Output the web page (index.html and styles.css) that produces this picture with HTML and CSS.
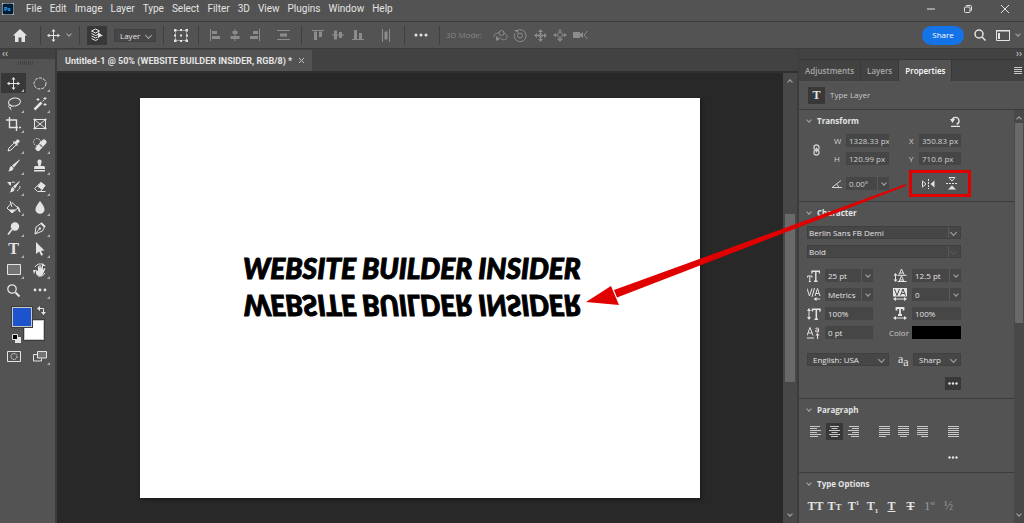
FILE: index.html
```html
<!doctype html>
<html lang="en">
<head>
    <meta charset="UTF-8">
    <meta name="viewport" content="width=device-width, initial-scale=1.0">
    <title>Untitled-1 @ 50%</title>
    <link rel="stylesheet" href="styles.css">
</head>
<body>
    <header class="menubar">
        <svg class="logo" viewBox="0 0 12 12"><rect width="12" height="12" rx="2" fill="#001e36"/><text x="2" y="8" class="logo-text">Ps</text></svg>
        <nav class="menus">
            <button>File</button>
            <button>Edit</button>
            <button>Image</button>
            <button>Layer</button>
            <button>Type</button>
            <button>Select</button>
            <button>Filter</button>
            <button>3D</button>
            <button>View</button>
            <button>Plugins</button>
            <button>Window</button>
            <button>Help</button>
        </nav>
        <div class="window-buttons">
            <button aria-label="Minimize"><svg width="10" height="10" viewBox="0 0 10 10"><path d="M1 5h8"/></svg></button>
            <button aria-label="Restore"><svg width="10" height="10" viewBox="0 0 10 10"><rect x="1.5" y="3" width="5.5" height="5.5" rx="1"/><path d="M3 2.500q0-1 1-1h3.500q1 0 1 1v3.500q0 1-1 1"/></svg></button>
            <button aria-label="Close"><svg width="10" height="10" viewBox="0 0 10 10"><path d="M1 1l8 8M9 1L1 9"/></svg></button>
        </div>
    </header>

    <div class="options">
        <button class="opt home" aria-label="Home"><svg width="14" height="13" viewBox="0 0 14 13"><path class="fill" d="M7 0L14 6.500h-2V13H8.500V8.500h-3V13H2V6.500H0z"/></svg></button>
        <div class="group g-move">
            <button class="opt" aria-label="Move tool"><svg width="13" height="13" viewBox="0 0 13 13"><path d="M6.500 1v11M1 6.500h11"/><path class="fill" d="M6.500 0l2 2.500h-4zM6.500 13l2-2.500h-4zM0 6.500l2.500-2v4zM13 6.500l-2.500-2v4z"/></svg></button>
            <span class="chev"></span>
        </div>
        <div class="group g-layer">
            <button class="opt active" aria-label="Auto-select"><svg width="14" height="14" viewBox="0 0 14 14"><path d="M5.500 1l4 2-4 2-4-2zM1.500 5.500l4 2 2.500-1M1.500 8l4 2 2-1M1.500 10.500l4 2 2.500-1.200"/><path class="fill" d="M8 4l5 4-3 .500-2 2z"/></svg></button>
            <label class="select pick">
                <select aria-label="Auto-select target"><option>Layer</option><option>Group</option></select>
            </label>
        </div>
        <div class="group g-box">
            <button class="opt" aria-label="Show transform controls"><svg width="14" height="13" viewBox="0 0 14 13"><path stroke-dasharray="1 1" d="M1.500 1.500h11v10h-11z"/><path class="fill" d="M0 0h2.500v2.500H0zM6 0h2v2H6zM11.500 0H14v2.500h-2.500zM0 5.500h2v2H0zM6 5.500h2v2H6zM12 5.500h2v2h-2zM0 10.500h2.500V13H0zM6 11h2v2H6zM11.500 10.500H14V13h-2.500z"/></svg></button>
        </div>
        <div class="group g-align dim">
            <button class="opt" aria-label="Align left"><svg width="12" height="12" viewBox="0 0 12 12"><path d="M1.500 0v12"/><path class="fill" d="M3 2h5v3H3zM3 7h8v3H3z"/></svg></button>
            <button class="opt" aria-label="Align centers"><svg width="12" height="12" viewBox="0 0 12 12"><path d="M6 0v12"/><path class="fill" d="M3.500 2h5v3h-5zM1.500 7h9v3h-9z"/></svg></button>
            <button class="opt" aria-label="Align right"><svg width="12" height="12" viewBox="0 0 12 12"><path d="M10.500 0v12"/><path class="fill" d="M4 2h5v3H4zM1 7h8v3H1z"/></svg></button>
            <button class="opt wide" aria-label="Distribute vertically"><svg width="13" height="12" viewBox="0 0 13 12"><path d="M0 1.500h13M0 10.500h13"/><path class="fill" d="M3 4.500h7v3H3z"/></svg></button>
        </div>
        <div class="group g-valign dim">
            <button class="opt" aria-label="Align top"><svg width="12" height="12" viewBox="0 0 12 12"><path d="M0 1.500h12"/><path class="fill" d="M2 2.500h3V11H2zM7 2.500h3V8H7z"/></svg></button>
            <button class="opt" aria-label="Align middle"><svg width="12" height="12" viewBox="0 0 12 12"><path d="M0 6h12"/><path class="fill" d="M2 1.500h3v9H2zM7 3h3v6H7z"/></svg></button>
            <button class="opt" aria-label="Align bottom"><svg width="12" height="12" viewBox="0 0 12 12"><path d="M0 10.500h12"/><path class="fill" d="M2 1h3v9H2zM7 4h3v6H7z"/></svg></button>
            <button class="opt wide" aria-label="Distribute horizontally"><svg width="10" height="13" viewBox="0 0 10 13"><path d="M1.500 0v13M8.500 0v13"/><path class="fill" d="M3.500 2.500h3v8h-3z"/></svg></button>
        </div>
        <div class="group g-more">
            <button class="opt" aria-label="More options"><svg width="14" height="4" viewBox="0 0 14 4"><g class="fill"><circle cx="2" cy="2" r="1.500"/><circle cx="7" cy="2" r="1.500"/><circle cx="12" cy="2" r="1.500"/></g></svg></button>
        </div>
        <div class="group g-3d dim">
            <span class="mode">3D Mode:</span>
            <button class="opt" aria-label="Orbit"><svg width="15" height="13" viewBox="0 0 15 13"><circle cx="8.500" cy="4" r="2.500"/><path d="M6 4C2 4 0 6 1.500 8M11 4c3 1.500 4 4 2 6s-5 0-6-1.500"/><path class="fill" d="M3 7l4 3-4 2z"/></svg></button>
            <button class="opt" aria-label="Roll"><svg width="14" height="13" viewBox="0 0 14 13"><circle cx="7" cy="6.500" r="2.500"/><path d="M4 1.500a6 6 0 1 1-2.500 3"/><path class="fill" d="M1 1h4v3z"/></svg></button>
            <button class="opt" aria-label="Pan"><svg width="13" height="13" viewBox="0 0 13 13"><path d="M6.500 2v9M2 6.500h9"/><circle cx="6.500" cy="6.500" r="2"/><path class="fill" d="M6.500 0L9 3H4zM6.500 13L9 10H4zM0 6.500L3 4v5zM13 6.500L10 4v5z"/></svg></button>
            <button class="opt" aria-label="Slide"><svg width="14" height="13" viewBox="0 0 14 13"><circle cx="7" cy="6" r="2.500"/><path d="M1 6h3M10 6h3"/><path class="fill" d="M7 0l2 2.500H5zM7 13l3-3.500H4zM0 6l3-2v4zM14 6l-3-2v4z"/></svg></button>
            <button class="opt" aria-label="Zoom camera"><svg width="15" height="10" viewBox="0 0 15 10"><path class="fill" d="M0 2h7v6H0zM7 4l3-2v6L7 6z"/><path d="M14.500 1L11 5l3.500 4"/></svg></button>
        </div>
        <div class="right-tools">
            <button class="share">Share</button>
            <button class="opt" aria-label="Search"><svg width="12" height="12" viewBox="0 0 12 12"><g stroke-width="1.500"><circle cx="5" cy="5" r="4"/><path d="M8 8l3.500 3.500"/></g></svg></button>
            <button class="opt" aria-label="Workspace"><svg width="14" height="11" viewBox="0 0 14 11"><path d="M.500 .500h13v10H.500z"/><path class="fill" d="M2 3h2v6H2zM0 0h14v1.500H0z"/></svg></button>
            <span class="chev"></span>
        </div>
    </div>

    <main class="workspace">
        <aside class="tools">
            <div class="strip">‹‹</div>
            <div class="grip"></div>
            <div class="tool-grid">
                <button class="active corner" aria-label="Move"><svg width="13" height="13" viewBox="0 0 13 13"><path d="M6.500 1v11M1 6.500h11"/><path class="fill" d="M6.500 0l2 2.500h-4zM6.500 13l2-2.500h-4zM0 6.500l2.500-2v4zM13 6.500l-2.500-2v4z"/></svg></button>
                <button class="corner" aria-label="Marquee"><svg width="14" height="13" viewBox="0 0 14 13"><ellipse cx="7" cy="6.500" rx="6" ry="5.500" stroke-dasharray="3 1.200"/></svg></button>
                <button class="corner" aria-label="Lasso"><svg width="14" height="14" viewBox="0 0 14 14"><ellipse cx="7.500" cy="5" rx="6" ry="4" transform="rotate(-10 7.500 5)"/><path d="M3 8c-2 0-2 2.500 0 2.500S5 8 3 8M3 10.500q0 2 1.500 2.500"/></svg></button>
                <button class="corner" aria-label="Magic wand"><svg width="14" height="14" viewBox="0 0 14 14"><path stroke-width="2.500" d="M1.500 12.500l7-7"/><path d="M9.500 4.500l1.500-1.500M5 1v3M3.500 2.500h3M12 6v3M10.500 7.500h3M12 0v3M10.500 1.500h3"/></svg></button>
                <button class="corner" aria-label="Crop"><svg width="15" height="14" viewBox="0 0 15 14"><path stroke-width="1.400" d="M3.500 0v10.500H12M0 3h10.500v11M13 10.500h2"/></svg></button>
                <button aria-label="Frame"><svg width="14" height="12" viewBox="0 0 14 12"><path d="M.500 1.500h13M.500 10.500h13M1.500 .500v11M12.500 .500v11M2 2l10 8M12 2L2 10"/></svg></button>
                <button class="corner" aria-label="Eyedropper"><svg width="13" height="13" viewBox="0 0 13 13"><path d="M7 4L2 9l-1 3 3-1 5-5"/><path class="fill" d="M6 3l1-1 1 1 2-2.500q3-.500 2.500 2.500L10 5l1 1-1 1z"/></svg></button>
                <button class="corner" aria-label="Healing brush"><svg width="14" height="14" viewBox="0 0 14 14"><path stroke-width="5" stroke-linecap="round" d="M5 10.500L11 4"/><circle cx="4" cy="4" r="3.500" stroke-dasharray="1.500 1"/><path class="cut" d="M6.500 6l3.500 3.500M8 7.500v.800"/></svg></button>
                <button class="corner" aria-label="Brush"><svg width="13" height="13" viewBox="0 0 13 13"><path class="fill" d="M12.500 .500q.500 0 0 1L7 8.500 5 6.500zM4.500 7l2 2q0 3-5.500 3.500 1.500-1 1.500-3T4.500 7z"/></svg></button>
                <button class="corner" aria-label="Clone stamp"><svg width="13" height="13" viewBox="0 0 13 13"><path class="fill" d="M5.500 7L4.500 3.500Q4 .500 6.500 .500t2 3L7.500 7H11q1 0 1 3H1q0-3 1-3zM1 11h11v1.500H1z"/></svg></button>
                <button class="corner" aria-label="History brush"><svg width="14" height="13" viewBox="0 0 14 13"><path class="fill" d="M12.500 1q.500 0 0 1L8 8.500 6 6.500zM5.500 7l2 2q0 3-5 3.500 1.500-1 1.500-3t1.500-2.500z"/><path d="M2 5q2-4 6-2.500M13 6q0 3-3 5" stroke-dasharray="3 1"/><path class="fill" d="M0 2h4v4z"/></svg></button>
                <button class="corner" aria-label="Eraser"><svg width="13" height="12" viewBox="0 0 13 12"><path d="M1.500 7.500l3 3h3l4.500-6-4-3z"/><path class="fill" d="M8 1l4.500 3.500L9 9 4.500 5.500z"/><path d="M7 10.500h5.500"/></svg></button>
                <button class="corner" aria-label="Paint bucket"><svg width="15" height="13" viewBox="0 0 15 13"><path d="M6 1.500l6 5.500-6 5-5-5zM4 0l2 6"/><path class="fill" d="M3 8.500h7L6 12zM11 5q3 1 3.500 6.500Q12 11 12 7z"/></svg></button>
                <button class="corner" aria-label="Blur"><svg width="10" height="13" viewBox="0 0 10 13"><path class="fill" d="M5 0q4.500 5.500 4.500 8.500a4.500 4.300 0 0 1-9 0Q.500 5.500 5 0z"/></svg></button>
                <button class="corner" aria-label="Dodge"><svg width="13" height="13" viewBox="0 0 13 13"><circle class="fill" cx="8" cy="4.500" r="4.200"/><path stroke-width="1.600" d="M5 7.500l-4 5"/></svg></button>
                <button class="corner" aria-label="Pen"><svg width="13" height="13" viewBox="0 0 13 13"><path d="M8 1.500l3.500 3.500-2 4L2 12l1-7zM2 12l4.500-5"/><circle class="fill" cx="6.800" cy="6.500" r="1.200"/><path stroke-width="2" d="M8 1l4 4"/></svg></button>
                <button class="corner glyph" aria-label="Type">T</button>
                <button class="corner" aria-label="Path selection"><svg width="10" height="14" viewBox="0 0 10 14"><path class="fill" d="M1 0l8.500 8.500-3.500.300 2 4-1.800.900-2-4.200L1 12z"/></svg></button>
                <button class="corner" aria-label="Rectangle"><svg width="14" height="11" viewBox="0 0 14 11"><path fill="#737373" d="M.500 .500h13v10H.500z"/></svg></button>
                <button class="corner" aria-label="Rotate view"><svg width="14" height="14" viewBox="0 0 14 14"><path class="fill" d="M3 7l2 1V3l1 0 .500 3V2h1l.500 4 1-3.500 1 .500v4l1.500-2 1 .500-2 4.500q-1 3-3.500 3-3 0-4-2z"/><path d="M2 4q3-4.500 8-2.500M12 10q-2 4-7 3"/><path class="fill" d="M9 0l4 3H9zM0 7h3l-2 4z"/></svg></button>
                <button aria-label="Zoom"><svg width="13" height="13" viewBox="0 0 13 13"><circle cx="5" cy="5" r="4.200" stroke-width="1.300"/><path stroke-width="2" d="M8.500 8.500l4 4"/></svg></button>
                <button class="corner" aria-label="Edit toolbar"><svg width="14" height="4" viewBox="0 0 14 4"><g class="fill"><circle cx="2" cy="2" r="1.400"/><circle cx="7" cy="2" r="1.400"/><circle cx="12" cy="2" r="1.400"/></g></svg></button>
            </div>
            <div class="swatches">
                <button class="swatch back" aria-label="Background color"></button>
                <button class="swatch front" aria-label="Foreground color"></button>
                <button class="swap" aria-label="Swap colors"><svg width="9" height="9" viewBox="0 0 9 9"><path d="M2 2.500h4.500V7"/><path class="fill" d="M0 2.500L3 0v5zM6.500 9L4 6h5z"/></svg></button>
                <button class="reset" aria-label="Default colors"><svg width="9" height="9" viewBox="0 0 9 9"><path class="fill" d="M3 3h6v6H3z"/><path fill="#000" d="M.500 .500h5v5h-5z"/></svg></button>
            </div>
            <div class="modes">
                <button aria-label="Quick mask"><svg width="14" height="11" viewBox="0 0 14 11"><path d="M.500 .500h13v10H.500z"/><circle cx="7" cy="5.500" r="3" stroke-dasharray="1.500 .700"/></svg></button>
                <button class="corner" aria-label="Screen mode"><svg width="14" height="11" viewBox="0 0 14 11"><path d="M4.500 3.500H.500v6.500h8V7.500"/><path fill="#737373" d="M4.500 .500h9v6.500h-9z"/></svg></button>
            </div>
        </aside>

        <section class="document">
            <div class="doc-tabs">
                <div class="doc-tab">
                    <span>Untitled-1 @ 50% (WEBSITE BUILDER INSIDER, RGB/8) *</span>
                    <button aria-label="Close document"><svg width="5" height="5" viewBox="0 0 5 5"><path d="M0 0l5 5M5 0L0 5"/></svg></button>
                </div>
            </div>
            <div class="stage">
                <div class="pasteboard">
                    <div class="paper">
                        <p class="artwork">WEBSITE BUILDER INSIDER</p>
                        <p class="artwork flipped">WEBSITE BUILDER INSIDER</p>
                    </div>
                </div>
                <div class="scroll doc-scroll"><span class="chev up"></span><span class="thumb"></span><span class="chev"></span></div>
            </div>
        </section>

        <aside class="panel">
            <div class="strip end">››</div>
            <div class="panel-tabs">
                <button>Adjustments</button>
                <button>Layers</button>
                <button class="current">Properties</button>
                <button class="panel-menu" aria-label="Panel menu"><svg width="8" height="7" viewBox="0 0 8 7"><path d="M0 .500h8M0 2.500h8M0 4.500h8M0 6.500h8"/></svg></button>
            </div>
            <div class="kind"><span class="kind-icon">T</span>Type Layer</div>

            <div class="panel-body">
                <div class="sections">
                    <section class="section">
                        <h2><span class="chev"></span>Transform
                            <button class="undo" aria-label="Reset transform"><svg width="11" height="11" viewBox="0 0 11 11"><path d="M2 4.500a3.500 3.500 0 1 1 4.500 3.700M1 10.500h9" stroke-width="1.400"/><path class="fill" d="M0 3h5L2.500 7z"/></svg></button>
                        </h2>
                        <div class="transform">
                            <button class="link" aria-label="Link width and height"><svg width="7" height="12" viewBox="0 0 7 12"><path stroke-width="1.300" d="M1 4.500V3a2.500 2 0 0 1 5 0v1.500q0 1-1.500 1h-2q-1.500 0-1.500-1M1 7.500V9a2.500 2 0 0 0 5 0V7.500q0-1-1.500-1h-2q-1.500 0-1.500 1M3.500 3.500v5"/></svg></button>
                            <label for="w">W</label><input id="w" value="1328.33 px">
                            <label class="second" for="x">X</label><input id="x" value="350.83 px">
                            <label for="h">H</label><input id="h" value="120.99 px">
                            <label class="second" for="y">Y</label><input id="y" value="710.6 px">
                            <label class="angle" for="angle" aria-label="Angle"><svg width="11" height="8" viewBox="0 0 11 8"><path d="M10 .500L1 7.500h10M5.500 4q2 1 2 3.500"/></svg></label>
                            <div class="combo"><input id="angle" value="0.00°"><button aria-label="Angle presets"><span class="chev"></span></button></div>
                            <div class="flip">
                                <button aria-label="Flip horizontal"><svg width="13" height="10" viewBox="0 0 13 10"><path d="M.500 2v6L4 5z"/><path class="fill" d="M12.500 1.500v7L8.500 5z"/><path stroke-dasharray="2 1" d="M6.500 0v10"/></svg></button>
                                <button aria-label="Flip vertical"><svg width="12" height="13" viewBox="0 0 12 13"><path d="M3 .500h6L6 4z"/><path class="fill" d="M2 12.500h8L6 8.500z"/><path stroke-dasharray="2 1" d="M0 6.500h12"/></svg></button>
                                <svg class="pointer" width="321" height="136" viewBox="0 0 321 136"><path d="M320 14L28 120l3 7.500L320 16z"/><path d="M0 132l25-16 8 19z"/></svg>
                            </div>
                        </div>
                    </section>

                    <section class="section">
                        <h2><span class="chev"></span>Character</h2>
                        <div class="fonts">
                            <label class="select split"><select aria-label="Font family"><option>Berlin Sans FB Demi</option></select></label>
                            <label class="select split off"><select aria-label="Font style"><option>Bold</option></select></label>
                        </div>
                        <div class="character">
                            <label for="size"><svg width="13" height="12" viewBox="0 0 13 12"><path d="M.500 7.500V6h4.500v1.500M2.800 6v5.500M1.800 11.500h2"/><path stroke-width="1.400" d="M5 3.500V1.200h7.500v2.300M8.800 1v10M7 11.300h3.500"/></svg></label>
                            <div class="combo"><input id="size" value="25 pt"><button aria-label="Sizes"><span class="chev"></span></button></div>
                            <label for="leading" class="second"><svg width="14" height="13" viewBox="0 0 14 13"><path d="M2.500 5v7M6 5.500L8.500 0 11 5.500M7 4h3M6 12.500L8.500 7l2.500 5.500M7 11h3M4.500 6.300h9M4.500 12.500h9"/><path class="fill" d="M2.500 4l2 2.500h-4zM2.500 13l2-2.500h-4z"/></svg></label>
                            <div class="combo"><input id="leading" value="12.5 pt"><button aria-label="Leadings"><span class="chev"></span></button></div>

                            <label for="kerning"><svg width="14" height="13" viewBox="0 0 14 13"><path d="M0 .500L2.500 8 5 .500M7.500 0L5 9M8 8l2.500-7.500L13 8M9 5.500h3M8 11h5"/><path class="fill" d="M6.500 11l3-2v4z"/></svg></label>
                            <div class="combo"><input id="kerning" value="Metrics"><button aria-label="Kernings"><span class="chev"></span></button></div>
                            <label for="tracking" class="second"><svg width="14" height="13" viewBox="0 0 14 13"><path class="fill" d="M0 0h14v8.500H0z"/><path class="cut" d="M1.500 1L4 7.500 6.500 1M7.500 7.500L10 1l2.500 6.500M8.500 5.500h3"/><path d="M1 11h12"/><path class="fill" d="M0 11l3-2v4zM14 11l-3-2v4z"/></svg></label>
                            <div class="combo"><input id="tracking" value="0"><button aria-label="Trackings"><span class="chev"></span></button></div>

                            <label for="vscale"><svg width="14" height="12" viewBox="0 0 14 12"><path d="M2 2v8"/><path stroke-width="1.500" d="M5.500 3.500V1.200h7.500v2.300M9.300 1v10M7.500 11.300h3.500"/><path class="fill" d="M2 0l2 3H0zM2 12l2-3H0z"/></svg></label>
                            <input id="vscale" value="100%">
                            <label for="hscale" class="second"><svg width="14" height="13" viewBox="0 0 14 13"><path stroke-width="1.800" d="M3.500 3.500V1h7v2.500M7 1v7M5 8h4"/><path d="M1 11h12"/><path class="fill" d="M0 11l3-2v4zM14 11l-3-2v4z"/></svg></label>
                            <input id="hscale" value="100%">

                            <label for="baseline"><svg width="14" height="12" viewBox="0 0 14 12"><path d="M0 8.500L3 .500l3 8M1 6h4M0 11h7M8.500 1.500q3-1.500 3 .500v3q-3 .500-3-1t3-1M10.500 7v5"/><path class="fill" d="M10.500 6l2 2.500h-4z"/></svg></label>
                            <input id="baseline" value="0 pt">
                            <label for="color" class="second color-label">Color</label>
                            <button id="color" class="color"></button>
                        </div>
                        <div class="language">
                            <label class="select"><select aria-label="Language"><option>English: USA</option></select></label>
                            <label for="aa" class="aa">a<sub>a</sub></label>
                            <div class="select"><select id="aa"><option>Sharp</option></select></div>
                        </div>
                        <button class="dots boxed" aria-label="More character options"><svg width="10" height="3" viewBox="0 0 10 3"><g class="fill"><circle cx="1.500" cy="1.500" r="1.200"/><circle cx="5" cy="1.500" r="1.200"/><circle cx="8.500" cy="1.500" r="1.200"/></g></svg></button>
                    </section>

                    <section class="section">
                        <h2><span class="chev"></span>Paragraph</h2>
                        <div class="paragraph">
                            <button aria-label="Left align"><svg width="11" height="11" viewBox="0 0 11 11"><path d="M0 .500h10M0 2.500h7M0 4.500h11M0 6.500h7M0 8.500h11M0 10.500h8"/></svg></button>
                            <button class="active" aria-label="Center"><svg width="11" height="11" viewBox="0 0 11 11"><path d="M1 .500h9M2.500 2.500h6M0 4.500h11M2.500 6.500h6M0 8.500h11M2 10.500h7"/></svg></button>
                            <button aria-label="Right align"><svg width="11" height="11" viewBox="0 0 11 11"><path d="M1 .500h10M4 2.500h7M0 4.500h11M4 6.500h7M0 8.500h11M3 10.500h8"/></svg></button>
                            <button class="apart" aria-label="Justify last left"><svg width="11" height="11" viewBox="0 0 11 11"><path d="M0 .500h11M0 2.500h11M0 4.500h11M0 6.500h11M0 8.500h11M0 10.500h7"/></svg></button>
                            <button aria-label="Justify last centered"><svg width="11" height="11" viewBox="0 0 11 11"><path d="M0 .500h11M0 2.500h11M0 4.500h11M0 6.500h11M0 8.500h11M2 10.500h7"/></svg></button>
                            <button aria-label="Justify last right"><svg width="11" height="11" viewBox="0 0 11 11"><path d="M0 .500h11M0 2.500h11M0 4.500h11M0 6.500h11M0 8.500h11M4 10.500h7"/></svg></button>
                            <button class="apart" aria-label="Justify all"><svg width="11" height="11" viewBox="0 0 11 11"><path d="M0 .500h11M0 2.500h11M0 4.500h11M0 6.500h11M0 8.500h11M0 10.500h11"/></svg></button>
                        </div>
                        <button class="dots" aria-label="More paragraph options"><svg width="10" height="3" viewBox="0 0 10 3"><g class="fill"><circle cx="1.500" cy="1.500" r="1.200"/><circle cx="5" cy="1.500" r="1.200"/><circle cx="8.500" cy="1.500" r="1.200"/></g></svg></button>
                    </section>

                    <section class="section">
                        <h2><span class="chev"></span>Type Options</h2>
                        <div class="type-options">
                            <button>TT</button>
                            <button>T<small>T</small></button>
                            <button>T<sup>1</sup></button>
                            <button>T<sub>1</sub></button>
                            <button><u>T</u></button>
                            <button><s>T</s></button>
                            <button class="faint">1<sup>st</sup></button>
                            <button class="faint">½</button>
                        </div>
                    </section>
                </div>
                <div class="scroll panel-scroll"><span class="chev up"></span><span class="thumb"></span><span class="chev"></span></div>
            </div>
        </aside>
    </main>
</body>
</html>
```
FILE: styles.css
```css
* {
    box-sizing: border-box;
}

body {
    margin: 0;
    height: 100vh;
    display: flex;
    flex-direction: column;
    overflow: hidden;
    background: #535353;
    color: #e4e4e4;
    font-family: "Open Sans", "Noto Sans", sans-serif;
    font-size: 8px;
    line-height: 12px;
}

button,
input,
select {
    font: inherit;
    color: inherit;
    margin: 0;
    padding: 0;
    border: 0;
    background: none;
}

button {
    display: flex;
    align-items: center;
    justify-content: center;
}

svg {
    display: block;
    flex: none;
    fill: none;
    stroke: currentColor;
}

.fill {
    fill: currentColor;
    stroke: none;
}

.cut {
    stroke: #484848;
}

.chev {
    width: 4px;
    height: 4px;
    flex: none;
    border: solid #a8a8a8;
    border-width: 0 1px 1px 0;
    transform: translateY(-1px) rotate(45deg);
}

.chev.up {
    transform: translateY(1px) rotate(225deg);
}

/* menu bar */

.menubar {
    height: 22px;
    flex: none;
    display: flex;
    align-items: center;
    padding: 0 10px 3px 2px;
    border-bottom: 1px solid #3c3c3c;
}

.logo {
    width: 12px;
    height: 12px;
}

.logo-text {
    font: bold 6px "Open Sans", sans-serif;
    fill: #31a8ff;
    stroke: none;
}

.menus {
    display: flex;
    gap: 8px;
    margin-left: 12px;
    font-family: Roboto, sans-serif;
    font-size: 10px;
}

.window-buttons {
    display: flex;
    gap: 27px;
    margin-left: auto;
    padding-right: 4px;
}

/* options bar */

.options {
    height: 27px;
    flex: none;
    display: flex;
    align-items: center;
    border-bottom: 1px solid #3c3c3c;
}

.opt {
    width: 20px;
    height: 19px;
}

.opt.active {
    background: #383838;
}

.home {
    margin: 0 10px;
}

.group {
    display: flex;
    align-items: center;
    height: 19px;
    border-left: 1px solid #3f3f3f;
}

.g-move {
    width: 39px;
    padding-left: 2px;
    gap: 4px;
}

.g-layer {
    width: 84px;
    padding-left: 7px;
    gap: 7px;
}

.g-box {
    width: 35px;
    padding-left: 7px;
}

.g-align {
    width: 103px;
    padding-left: 6px;
}

.g-valign {
    width: 103px;
    padding-left: 6px;
}

.g-more {
    width: 35px;
    padding-left: 6px;
}

.g-3d {
    padding-left: 6px;
}

.wide {
    margin-left: 8px;
}

.dim {
    color: #8c8c8c;
}

.mode {
    width: 44px;
    color: #848484;
}

.right-tools {
    display: flex;
    align-items: center;
    gap: 3px;
    margin-left: auto;
    padding-right: 4px;
}

.share {
    width: 42px;
    height: 19px;
    margin-right: 3px;
    border-radius: 10px;
    background: #1473e6;
    color: #fff;
    font-size: 8px;
}

/* drop-downs and fields */

.select {
    position: relative;
    display: block;
    height: 13px;
    background: #464646;
    border: 1px solid #404040;
}

.select::after {
    content: "";
    position: absolute;
    right: 4px;
    top: 3px;
    width: 4px;
    height: 4px;
    border: solid #a8a8a8;
    border-width: 0 1px 1px 0;
    transform: rotate(45deg);
}

.select select {
    appearance: none;
    display: block;
    width: 100%;
    height: 100%;
    padding-left: 5px;
}

.split select {
    padding-left: 1px;
    background: linear-gradient(#5a5a5a, #5a5a5a) right 11px top / 1px 100% no-repeat;
}

.off::after {
    opacity: 0.2;
}

.pick {
    width: 42px;
}

input {
    width: 100%;
    min-width: 0;
    height: 13px;
    padding-left: 3px;
    background: #464646;
}

.combo {
    display: flex;
    height: 13px;
}

.combo button {
    width: 12px;
    flex: none;
    background: #464646;
    border-left: 1px solid #5a5a5a;
}

/* workspace */

.workspace {
    flex: 1;
    min-height: 0;
    display: grid;
    grid-template-columns: 57px 1fr 226px;
}

.strip {
    height: 10px;
    padding-left: 2px;
    background: #424242;
    color: #d0d0d0;
    font-size: 10px;
    line-height: 8px;
}

.strip.end {
    padding-right: 2px;
    text-align: right;
}

.tools {
    border-right: 2px solid #3c3c3c;
}

.grip {
    width: 16px;
    height: 4px;
    margin: 2px auto 8px 18px;
    background: repeating-linear-gradient(90deg, #424242 0 1px, #535353 1px 2px);
}

.tool-grid {
    display: grid;
    grid-template-columns: 25px 25px;
    grid-template-rows: repeat(11, 1fr);
    height: 228px;
    column-gap: 1px;
    padding-left: 1px;
}

.tool-grid button,
.modes button {
    position: relative;
    height: 20px;
}

.tool-grid .active {
    background: #383838;
}

.corner::after {
    content: "";
    position: absolute;
    right: 2px;
    bottom: 1px;
    border: solid transparent;
    border-width: 0 0 3px 3px;
    border-bottom-color: #b0b0b0;
}

.glyph {
    font: bold 16px "Liberation Serif", serif;
}

.swatches {
    position: relative;
    height: 45px;
}

.swatch,
.swap,
.reset {
    position: absolute;
}

.swatch {
    width: 20px;
    height: 20px;
    border: 1px solid #c8c8c8;
    outline: 1px solid #3c3c3c;
}

.front {
    left: 12px;
    top: 6px;
    background: #1d54cd;
}

.back {
    left: 24px;
    top: 19px;
    background: #fff;
}

.swap {
    left: 37px;
    top: 5px;
}

.reset {
    left: 12px;
    top: 33px;
}

.modes {
    display: grid;
    grid-template-columns: 25px 25px;
    column-gap: 1px;
    padding-left: 1px;
}

/* document */

.document {
    display: flex;
    flex-direction: column;
    min-width: 0;
}

.doc-tabs {
    height: 24px;
    flex: none;
    padding-top: 1px;
    background: #424242;
    border-bottom: 2px solid #303030;
}

.doc-tab {
    display: flex;
    align-items: center;
    width: max-content;
    height: 21px;
    padding: 0 8px;
    gap: 7px;
    background: #535353;
    font-family: Roboto, sans-serif;
    font-size: 9px;
    font-weight: bold;
}

.doc-tab button {
    color: #c0c0c0;
}

.stage {
    flex: 1;
    min-height: 0;
    display: flex;
}

.pasteboard {
    flex: 1;
    min-width: 0;
    display: flex;
    align-items: center;
    justify-content: center;
    background: #282828;
}

.paper {
    width: 560px;
    height: 400px;
    padding: 152px 18px 0 103px;
    background: #fff;
    box-shadow: 2px 2px 3px #1c1c1c;
    color: #000;
}

.artwork {
    margin: 0;
    font: italic 900 28px/37px Lato, sans-serif;
    white-space: nowrap;
    -webkit-text-stroke: 1px #000;
}

.flipped {
    transform: scaleY(-1);
}

.scroll {
    display: flex;
    flex-direction: column;
    align-items: center;
    justify-content: space-between;
    padding: 6px 0;
}

.doc-scroll {
    width: 15px;
    background: #484848;
    border-right: 1px solid #3c3c3c;
}

.doc-scroll .thumb {
    width: 10px;
    height: 168px;
    background: #696969;
}

/* properties panel */

.panel {
    display: flex;
    flex-direction: column;
    border-left: 1px solid #3c3c3c;
}

.panel-tabs {
    display: flex;
    height: 22px;
    flex: none;
    background: #424242;
    border-top: 1px solid #383838;
    color: #a8a8a8;
}

.panel-tabs button {
    padding: 0 6px;
    font-weight: 600;
    border-right: 1px solid #383838;
}

.panel-tabs .current {
    background: #535353;
    color: #fff;
}

.panel-tabs .panel-menu {
    margin-left: auto;
    padding: 0 2px;
    border: 0;
    color: #c8c8c8;
}

.kind {
    display: flex;
    align-items: center;
    gap: 5px;
    height: 28px;
    flex: none;
    padding-left: 9px;
    color: #c8c8c8;
}

.kind-icon {
    width: 17px;
    height: 17px;
    background: #383838;
    color: #e4e4e4;
    font: bold 12px/17px "Liberation Serif", serif;
    text-align: center;
}

.panel-body {
    flex: 1;
    min-height: 0;
    display: flex;
}

.sections {
    flex: 1;
    min-width: 0;
}

.section {
    position: relative;
    padding: 0 0 4px 8px;
    border-top: 1px solid #3c3c3c;
}

.section h2 {
    display: flex;
    align-items: center;
    gap: 6px;
    height: 22px;
    width: 154px;
    margin: 0 0 2px;
    font-size: 8px;
    line-height: 12px;
}

.undo {
    margin-left: auto;
}

.transform {
    display: grid;
    grid-template-columns: 27px 12px 43px 30px 42px;
    grid-template-rows: 13px 13px 27px;
    row-gap: 5px;
    align-items: center;
    color: #d0d0d0;
}

.link {
    grid-row: 1 / 3;
    width: 18px;
}

.transform .second {
    padding-left: 20px;
}

.angle {
    grid-column: 1 / 3;
    padding-left: 24px;
}

.flip {
    position: relative;
    grid-column: 4 / 6;
    display: flex;
    align-items: center;
    justify-content: center;
    gap: 11px;
    width: 62px;
    height: 27px;
    margin-left: 20px;
    border: 3px solid #e00000;
    color: #e4e4e4;
}

.pointer {
    position: absolute;
    z-index: 1;
    right: 61px;
    top: -3px;
    fill: #e00000;
    stroke: none;
}

.fonts {
    display: grid;
    gap: 6px;
    width: 154px;
}

.character {
    display: grid;
    grid-template-columns: 18px 48px 39px 49px;
    grid-auto-rows: 13px;
    row-gap: 6px;
    align-items: center;
    margin: 11px 0 14px;
}

.character .second {
    padding-left: 20px;
}

.character .color-label {
    padding-left: 16px;
    color: #c8c8c8;
}

.color {
    width: 49px;
    height: 13px;
    background: #000;
}

.language {
    display: grid;
    grid-template-columns: 82px 24px 48px;
}

.aa {
    padding-left: 9px;
    font: 12px/12px "Liberation Serif", serif;
}

.aa sub {
    font-size: 12px;
    line-height: 0;
}

.dots {
    width: 16px;
    height: 13px;
    margin: 11px 0 4px 138px;
}

.boxed {
    background: #383838;
}

.paragraph {
    display: flex;
    gap: 2px;
    height: 17px;
}

.paragraph button {
    width: 17px;
    color: #c8c8c8;
}

.paragraph .active {
    background: #383838;
}

.paragraph .apart {
    margin-left: 12px;
}

.type-options {
    display: flex;
    gap: 2px;
}

.type-options button {
    display: block;
    width: 17px;
    height: 18px;
    font: bold 12px/18px "Liberation Serif", serif;
    white-space: nowrap;
}

.type-options small {
    font-size: 9px;
}

.type-options sup,
.type-options sub {
    font-size: 7px;
    line-height: 0;
}

.type-options .faint {
    color: #9c9c9c;
    font-weight: normal;
}

.panel-scroll {
    width: 10px;
    justify-content: flex-start;
    background: #484848;
    border-top: 1px solid #3c3c3c;
}

.panel-scroll .thumb {
    width: 8px;
    height: 200px;
    margin: 3px 0 auto;
    background: #696969;
}
```
